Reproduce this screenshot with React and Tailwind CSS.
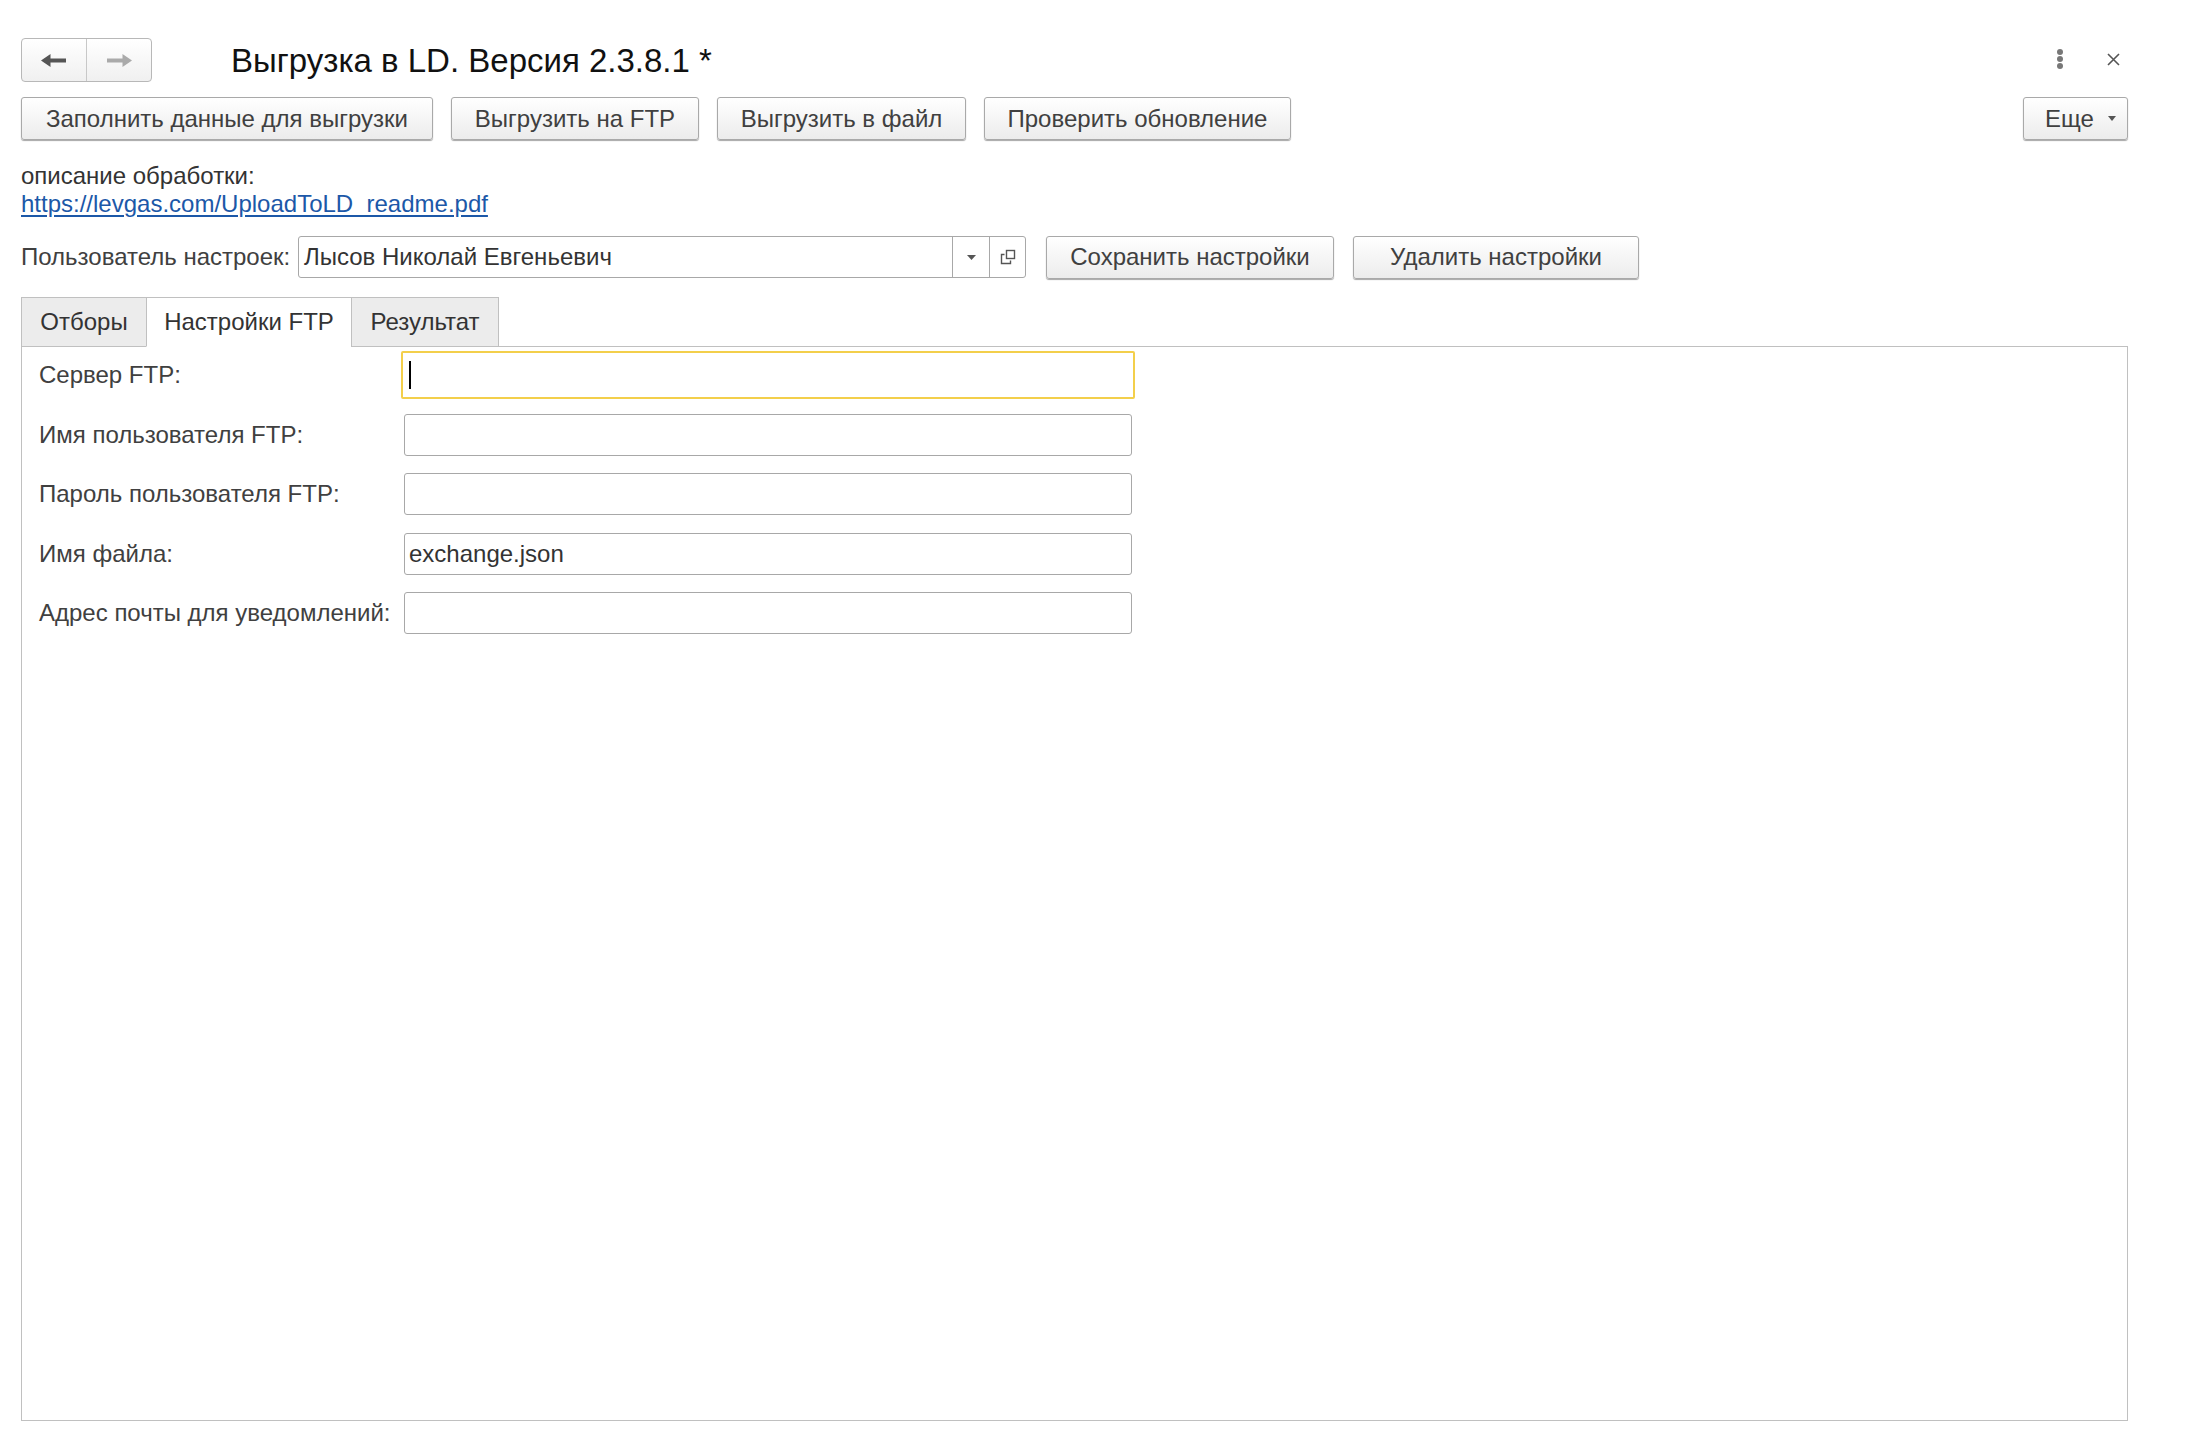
import React from "react";

const btn =
  "h-[43px] flex items-center justify-center rounded-[3px] border border-[#a9a9a9] bg-linear-to-b from-white to-[#ececec] shadow-[0_1px_1px_rgba(0,0,0,0.35)] text-[#404040] text-[24px] whitespace-nowrap";

function Field({ label, value, focused }) {
  return (
    <div className="flex items-center h-[42px]">
      <div className="w-[365px] text-[#404040] whitespace-nowrap">{label}</div>
      {focused ? (
        <div className="-m-[3px] w-[734px] h-[48px] border-2 border-[#f3cf4b] rounded-[2px] bg-white flex items-center pl-[6px]">
          <span className="w-[2px] h-[28px] bg-black" />
        </div>
      ) : (
        <div className="w-[728px] h-[42px] border border-[#a8a8a8] rounded-[3px] bg-white flex items-center pl-[4px] text-[#333]">
          {value}
        </div>
      )}
    </div>
  );
}

export default function App() {
  return (
    <div className="w-[2196px] h-[1432px] bg-white font-['Liberation_Sans',Arial,sans-serif] text-[24px] text-[#404040] pl-[21px] pt-[38px] overflow-hidden">
      <div className="w-[2107px] flex flex-col">
        {/* header */}
        <div className="flex items-center h-[44px]">
          <div className="flex w-[131px] h-[44px] rounded-[4px] border border-[#b8b8b8] bg-linear-to-b from-white to-[#f0f0f0]">
            <div className="w-[65px] flex items-center justify-center border-r border-[#c8c8c8]">
              <svg width="26" height="13" viewBox="0 0 26 13">
                <path d="M0 6.5 L9.5 0 V4.5 H25 V8.5 H9.5 V13 Z" fill="#555" />
              </svg>
            </div>
            <div className="flex-1 flex items-center justify-center">
              <svg width="26" height="13" viewBox="0 0 26 13">
                <path d="M26 6.5 L16.5 0 V4.5 H1 V8.5 H16.5 V13 Z" fill="#aaa" />
              </svg>
            </div>
          </div>
          <div className="ml-[79px] text-[33px] text-[#111] whitespace-nowrap leading-none">
            Выгрузка в LD. Версия 2.3.8.1 *
          </div>
          <div className="flex-1" />
          <div className="flex flex-col gap-[1px] -mt-[2px] mr-[44px]">
            <span className="w-[6px] h-[6px] rounded-full bg-[#777]" />
            <span className="w-[6px] h-[6px] rounded-full bg-[#777]" />
            <span className="w-[6px] h-[6px] rounded-full bg-[#777]" />
          </div>
          <svg width="13" height="13" viewBox="0 0 13 13" className="mr-[8px] -mt-[2px]">
            <path d="M1 1 L12 12 M12 1 L1 12" stroke="#555" strokeWidth="1.6" />
          </svg>
        </div>

        {/* command bar */}
        <div className="flex gap-[18px] mt-[15px]">
          <div className={btn + " w-[412px]"}>Заполнить данные для выгрузки</div>
          <div className={btn + " w-[248px]"}>Выгрузить на FTP</div>
          <div className={btn + " w-[249px]"}>Выгрузить в файл</div>
          <div className={btn + " w-[307px]"}>Проверить обновление</div>
          <div className={btn + " w-[105px] ml-auto gap-[14px] pl-[10px]"}>
            <span>Еще</span>
            <svg width="8" height="5" viewBox="0 0 8 5">
              <path d="M0 0 H8 L4 5 Z" fill="#555" />
            </svg>
          </div>
        </div>

        {/* description */}
        <div className="mt-[22px] leading-[28px]">
          <div className="text-[#333]">описание обработки:</div>
          <div className="text-[#1c58a8] underline underline-offset-[3px]">
            https://levgas.com/UploadToLD_readme.pdf
          </div>
        </div>

        {/* settings user */}
        <div className="flex items-center mt-[18px] h-[42px]">
          <div className="w-[277px] whitespace-nowrap text-[#404040]">Пользователь настроек:</div>
          <div className="w-[728px] h-[42px] border border-[#a8a8a8] rounded-[3px] bg-white flex">
            <div className="flex-1 flex items-center pl-[5px] text-[#333]">Лысов Николай Евгеньевич</div>
            <div className="w-[37px] border-l border-[#a8a8a8] flex items-center justify-center">
              <svg width="9" height="5" viewBox="0 0 9 5">
                <path d="M0 0 H9 L4.5 5 Z" fill="#555" />
              </svg>
            </div>
            <div className="w-[36px] border-l border-[#a8a8a8] flex items-center justify-center">
              <svg width="16" height="16" viewBox="0 0 16 16">
                <rect x="6.5" y="1.5" width="8" height="8" fill="none" stroke="#555" strokeWidth="1.4" />
                <path d="M4.5 5.5 H1.5 V14.5 H10.5 V11.5" fill="none" stroke="#555" strokeWidth="1.4" />
              </svg>
            </div>
          </div>
          <div className={btn + " w-[288px] ml-[20px]"}>Сохранить настройки</div>
          <div className={btn + " w-[286px] ml-[19px]"}>Удалить настройки</div>
        </div>

        {/* tabs */}
        <div className="flex mt-[19px] relative z-10 -mb-px">
          <div className="w-[126px] h-[50px] border border-[#c0c0c0] bg-[#ececec] flex items-center justify-center text-[#333]">
            Отборы
          </div>
          <div className="w-[206px] h-[50px] -ml-px border border-[#c0c0c0] border-b-white bg-white flex items-center justify-center text-[#333]">
            Настройки FTP
          </div>
          <div className="w-[148px] h-[50px] -ml-px border border-[#c0c0c0] bg-[#ececec] flex items-center justify-center text-[#333]">
            Результат
          </div>
        </div>

        {/* panel */}
        <div className="h-[1075px] border border-[#c0c0c0] pt-[7px] pl-[17px] flex flex-col gap-[17.5px]">
          <Field label="Сервер FTP:" focused />
          <Field label="Имя пользователя FTP:" value="" />
          <Field label="Пароль пользователя FTP:" value="" />
          <Field label="Имя файла:" value="exchange.json" />
          <Field label="Адрес почты для уведомлений:" value="" />
        </div>
      </div>
    </div>
  );
}
